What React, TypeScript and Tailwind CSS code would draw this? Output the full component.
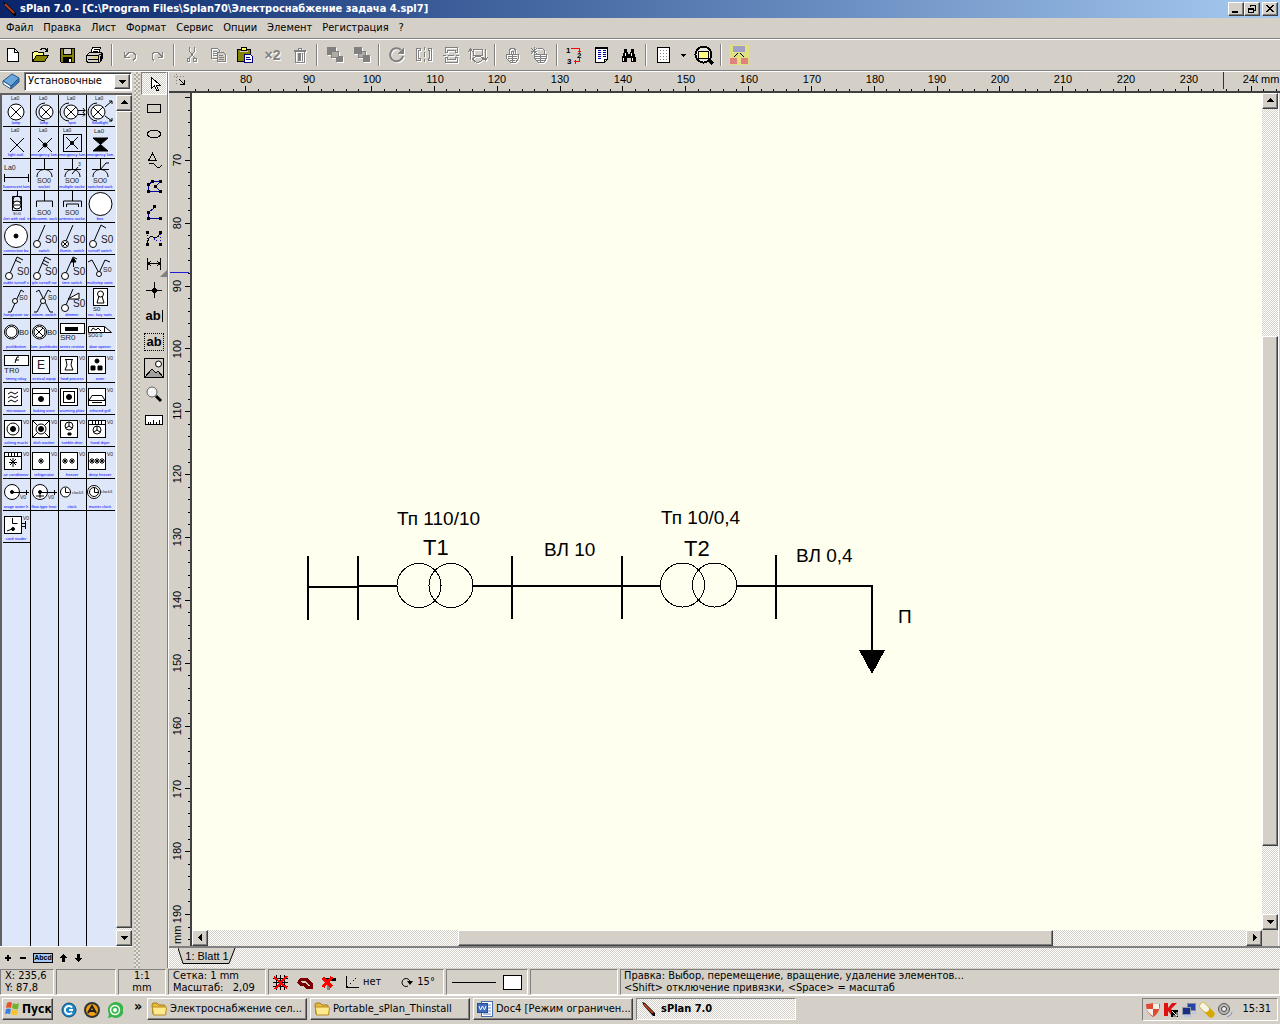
import type { ReactNode } from 'react';

const menuItems = ['Файл', 'Правка', 'Лист', 'Формат', 'Сервис', 'Опции', 'Элемент', 'Регистрация', '?'];

const GRAY = '#808080';
const FACE = '#d4d0c8';

const raised =
  'border border-t-white border-l-white border-r-[#404040] border-b-[#404040] bg-[#d4d0c8] shadow-[inset_-1px_-1px_0_#808080]';
const sunken = 'border border-t-[#808080] border-l-[#808080] border-r-white border-b-white';
const dither = 'bg-[repeating-conic-gradient(#ffffff_0_25%,#d4d0c8_0_50%)] bg-[length:2px_2px]';

type IconProps = { w?: number; h?: number; children: ReactNode };

function Icon({ w = 18, h = 18, children }: IconProps) {
  return (
    <svg
      width={w}
      height={h}
      viewBox={`0 0 ${w} ${h}`}
      fill="none"
      stroke="#000"
      shapeRendering="crispEdges"
      className="shrink-0"
      aria-hidden="true"
    >
      {children}
    </svg>
  );
}

// disabled icons get a white copy one pixel down and right
function Disabled({ w = 18, h = 18, children }: IconProps) {
  return (
    <svg width={w} height={h} viewBox={`0 0 ${w} ${h}`} fill="none" className="shrink-0" shapeRendering="crispEdges" aria-hidden="true">
      <g transform="translate(1 1)" className="text-white" stroke="currentColor">
        {children}
      </g>
      <g className="text-[#808080]" stroke="currentColor">
        {children}
      </g>
    </svg>
  );
}

function Pencil() {
  return (
    <svg width="16" height="16" viewBox="0 0 16 16" aria-hidden="true" className="shrink-0">
      <path d="M1 1l3 1 10 10v3h-2L3 5z" fill="#000" />
      <path d="M3 3l9 9" stroke="#c0401a" strokeWidth="2" />
      <path d="M4 3l9 9" stroke="#7a2a10" />
    </svg>
  );
}

type Tool = { name: string; icon: ReactNode };

const toolGroups: Tool[][] = [
  [
    {
      name: 'Новый',
      icon: (
        <Icon>
          <path d="M2.5 2.5h7l4 4v9h-11z" fill="#fff" />
          <path d="M9.5 2.5v4h4" />
        </Icon>
      ),
    },
    {
      name: 'Открыть',
      icon: (
        <Icon>
          <path d="M0.5 15.5v-9h1l1-1h3l1 1h5v3h-6z" fill="#ffff80" />
          <path d="M0.5 15.5l4-6h12l-4 6z" fill="#848200" />
          <path d="M8 3.5h1l1-1h3l1 1 1 1M15.5 2v3.5h-3" />
        </Icon>
      ),
    },
    {
      name: 'Сохранить',
      icon: (
        <Icon>
          <path d="M1.5 2.5h14v14h-13l-1-1z" fill="#848200" />
          <rect x="4.5" y="2.5" width="8" height="6" fill="#d4d0c8" />
          <rect x="4.5" y="11.5" width="8" height="5" fill="#000" />
          <rect x="10" y="13" width="2" height="3" fill="#fff" stroke="none" />
        </Icon>
      ),
    },
    {
      name: 'Печать',
      icon: (
        <Icon>
          <path d="M4.5 7.5l2-6h8l-2 6z" fill="#fff" />
          <path d="M8 3.5h5M7 5.5h5" />
          <path d="M0.5 9.5l3-3h11l2 1v5l-3 4h-12l-1-2z" fill="#d4d0c8" />
          <path d="M0.5 9.5h12v6M12.5 9.5l3-2M2 13.5h10M14.5 14.5v-5M15.5 13v-5" />
          <path d="M8 11.5h3" stroke="#e0d000" />
        </Icon>
      ),
    },
  ],
  [
    {
      name: 'Отменить',
      icon: (
        <Disabled>
          <path d="M3.5 6v5.5h5M4 10.5l4-4h4l2 2v4l-2 2" />
        </Disabled>
      ),
    },
    {
      name: 'Повторить',
      icon: (
        <Disabled>
          <path d="M14.5 6v5.5h-5M14 10.5l-4-4h-4l-2 2v4l2 2" />
        </Disabled>
      ),
    },
  ],
  [
    {
      name: 'Вырезать',
      icon: (
        <Disabled>
          <path d="M6.5 1v4l5 7M11.5 1v4l-5 7M9 7v3" />
          <path d="M4.5 12.5h2v3h-2zM10.5 12.5h3v3h-3z" />
        </Disabled>
      ),
    },
    {
      name: 'Копировать',
      icon: (
        <Disabled>
          <path d="M1.5 2.5h6l2 2v8h-8zM3 5.5h4M3 7.5h4M3 9.5h4" />
          <path d="M7.5 6.5h6l2 2v7h-8z" fill={FACE} />
          <path d="M9 9.5h4M9 11.5h5M9 13.5h5" />
        </Disabled>
      ),
    },
    {
      name: 'Вставить',
      icon: (
        <Icon>
          <rect x="0.5" y="3.5" width="13" height="12" fill="#848200" />
          <rect x="4.5" y="1.5" width="5" height="3" fill="#ffff60" />
          <path d="M3 5.5h8" stroke="#d4d0c8" />
          <path d="M7.5 8.5h6l2 2v6h-8z" fill="#fff" stroke="#000080" />
          <path d="M9 11.5h4M9 13.5h5" stroke="#000080" />
        </Icon>
      ),
    },
    {
      name: 'Дублировать',
      icon: <span className="font-['Liberation_Sans'] text-sm font-bold text-[#808080] [text-shadow:1px_1px_0_#fff]">×2</span>,
    },
    {
      name: 'Удалить',
      icon: (
        <Disabled>
          <path d="M3 4.5h12M3 5.5h12M7.5 4v-2h3v2M4.5 6v10h9v-10M7.5 7v8M9.5 7v8M11.5 7v8M8.5 7v8" />
        </Disabled>
      ),
    },
  ],
  [
    {
      name: 'На передний план',
      icon: (
        <Disabled>
          <path d="M1 1h9v8h-9zM10 10h7v6h-7z" fill="currentColor" stroke="none" />
          <rect x="5.5" y="5.5" width="7" height="6" fill="#b0aca4" />
        </Disabled>
      ),
    },
    {
      name: 'На задний план',
      icon: (
        <Disabled>
          <rect x="5.5" y="5.5" width="7" height="6" fill="#b0aca4" />
          <path d="M1 1h8v7h-8zM10 9h7v7h-7z" fill="currentColor" stroke="none" />
        </Disabled>
      ),
    },
  ],
  [
    {
      name: 'Повернуть',
      icon: (
        <Disabled>
          <path d="M13 4a6.5 6.5 0 1 0 2 6" strokeWidth="2" shapeRendering="auto" />
          <path d="M16 1v7h-7z" fill="currentColor" stroke="none" />
        </Disabled>
      ),
    },
    {
      name: 'Отразить по горизонтали',
      icon: (
        <Disabled>
          <path d="M5 2.5h-3.5v12h3.5v-2h-1.5v-8h1.5zM13 2.5h3.5v12h-3.5v-2h1.5v-8h-1.5zM9 1v3M9 6v5M9 13v3" />
        </Disabled>
      ),
    },
    {
      name: 'Отразить по вертикали',
      icon: (
        <Disabled>
          <path d="M3.5 6.5v-5h12v5h-2v-2h-8v2zM3.5 11.5v5h12v-5h-2v2h-8v-2zM1 9h3M6 9h6M14 9h3" />
        </Disabled>
      ),
    },
    {
      name: 'Развернуть',
      icon: (
        <Disabled w={20}>
          <path d="M5.5 3.5h9v6h-9zM2.5 14v-10M0 6l2.5-3 2.5 3M17.5 3v10M15 11l2.5 3 2.5-3M4 13l5-3h3l4 3-5 3h-3z" />
        </Disabled>
      ),
    },
  ],
  [
    {
      name: 'Блокировать',
      icon: (
        <Disabled>
          <path d="M5.5 8v-4l2-2h2l2 2v4M7.5 8v-3h2v3M2.5 8.5h12v4l-3 4h-5l-4-4zM4 10.5h9M4 12.5h9M6 14.5h5M8.5 9v7" />
        </Disabled>
      ),
    },
    {
      name: 'Разблокировать',
      icon: (
        <Disabled>
          <path d="M0 2l6 6M6 2l-6 6M3 1v7M0 5h6M7 3l2-1h2l2 2v4M3.5 8.5h12v4l-3 4h-5l-4-4zM4 10.5h11M4 12.5h11M6 14.5h7M9 9v7" />
        </Disabled>
      ),
    },
  ],
  [
    {
      name: 'Нумерация',
      icon: (
        <Icon w={20} h={20}>
          <path d="M6 3.5h8.5v4M13 6.5h3M14.5 13v3.500h-6M10.5 14.5v4" stroke="#f00" />
          <g className="font-['Liberation_Sans'] text-[8px] font-bold" fill="#000" stroke="none">
            <text x="1" y="8">1</text>
            <text x="12" y="13">2</text>
            <text x="2" y="19">3</text>
          </g>
        </Icon>
      ),
    },
    {
      name: 'Список элементов',
      icon: (
        <Icon>
          <path d="M2.5 1.5h12v12l-3 3h-9z" fill="#fff" />
          <path d="M3 2.5h11M14.5 2v12M11 16v-3h3" />
          <path d="M5 4.5h3M5 6.5h3M5 8.5h3M5 10.5h3M5 12.5h3M10 4.5h3M10 6.5h3M10 8.5h3M10 10.5h3" stroke="#0000a0" />
        </Icon>
      ),
    },
    {
      name: 'Найти',
      icon: (
        <Icon>
          <path d="M4 3h3v3h1v2h2v-2h1v-3h3v3l2 6v4h-5v-4h-4v4h-5v-4l2-6z" fill="#000" stroke="none" />
          <path d="M3.5 12v3M5.5 7v3M12.5 12v3M11.5 7v3" stroke="#fff" />
        </Icon>
      ),
    },
  ],
];

type SymbolDef = { label: string; draw: ReactNode };

const cross = (x: number, y: number, r: number) => `M${x - r} ${y - r}l${r * 2} ${r * 2}M${x + r} ${y - r}l${-r * 2} ${r * 2}`;

function T({ x, y, s = 5, children }: { x: number; y: number; s?: number; children: ReactNode }) {
  return (
    <text x={x} y={y} fontSize={s} fill="#222" stroke="none">
      {children}
    </text>
  );
}

function Lamp({ x = 13, r = 8 }: { x?: number; r?: number }) {
  return (
    <>
      <T x={8} y={5}>La0</T>
      <circle cx={x} cy="17" r={r} fill="#fff" />
      <path d={cross(x, 17, 5)} />
    </>
  );
}

function Socket({ children }: { children?: ReactNode }) {
  return (
    <>
      <path d="M13.5 0v10M5 10.5h17M6 18c0-10 15-10 15 0" />
      {children}
      <T x={6} y={24} s={7}>SO0</T>
    </>
  );
}

function Switch({ children }: { children?: ReactNode }) {
  return (
    <>
      <path d="M7 18l7-16" />
      <circle cx="6" cy="21" r="3.5" fill="#fff" />
      {children}
      <T x={14} y={20} s={10}>S0</T>
    </>
  );
}

function Device({ children }: { children?: ReactNode }) {
  return (
    <>
      <rect x="1.5" y="5.5" width="17" height="17" fill="#fff" />
      <T x={20} y={9}>V0</T>
      {children}
    </>
  );
}

const symbols: SymbolDef[] = [
  { label: 'lamp', draw: <Lamp /> },
  { label: 'lamp', draw: <><Lamp x={15} r={7} /><path d="M14 8a9 9 0 0 0 0 18" /></> },
  { label: 'spot', draw: <><Lamp x={12} r={7} /><path d="M10 8a9 9 0 0 0 0 18M19 15.5h7M19 19.5h7M24 13l2 2.5-2 2M24 17l2 2.5-2 2" /></> },
  { label: 'floodlight', draw: <><Lamp x={11} r={7} /><path d="M10 8a9 9 0 0 0 0 18M18 12l7-6M22 6h3v3M18 21l7 5M22 26h3v-3" /></> },
  { label: 'light outl.', draw: <><T x={8} y={5}>La0</T><path d={cross(14, 18, 7)} /></> },
  { label: 'emergency lum.', draw: <><T x={8} y={5}>La0</T><path d={cross(14, 18, 7)} /><circle cx="14" cy="18" r="2" fill="#000" /></> },
  { label: 'emergency lum.', draw: <><T x={4} y={5}>La0</T><rect x="4.5" y="7.5" width="18" height="17" /><path d={cross(13, 16, 6)} /><circle cx="13" cy="16" r="1.5" fill="#000" /></> },
  { label: 'emergency lum.', draw: <><T x={7} y={6} s={6}>La0</T><path d="M6 11h15l-15 13h15z" fill="#000" /></> },
  { label: 'fluorescent lam', draw: <><T x={1} y={11} s={7}>La0</T><path d="M1.5 15v8M25.5 15v8M2 18.5h23" /></> },
  { label: 'socket', draw: <Socket /> },
  { label: 'multiple socke', draw: <Socket><path d="M13 15l6-7" /><T x={19} y={7}>3</T></Socket> },
  { label: 'switched sock', draw: <Socket><path d="M13 11l6-7h3" /></Socket> },
  { label: 'cket with isol. tr', draw: <><path d="M14.5 0v6M9.5 5.500h9v14h-9z" /><circle cx="14" cy="9" r="4" /><circle cx="14" cy="14" r="4" fill="#fff" /><path d="M11 14h6" /><T x={10} y={24} s={4}>SO0</T></> },
  { label: 'elecomm. sock', draw: <><path d="M13.5 0v10M5.5 16v-6h16v6" /><T x={6} y={24} s={7}>SO0</T></> },
  { label: 'antenna socke', draw: <><path d="M13.5 0v10M4.5 16v-6h18v6M7.5 16v-3h12v3" /><T x={6} y={24} s={7}>SO0</T></> },
  { label: 'box', draw: <circle cx="13.5" cy="13" r="11.5" fill="#fff" /> },
  { label: 'connection bo', draw: <><circle cx="13" cy="13" r="11.5" fill="#fff" /><circle cx="13" cy="13" r="2" fill="#000" /></> },
  { label: 'switch', draw: <Switch /> },
  { label: 'illumin. switch', draw: <Switch><path d={cross(6, 21, 2)} /></Switch> },
  { label: 'turnoff switch', draw: <Switch><path d="M14 2l5 3" /></Switch> },
  { label: 'ouble turnoff s', draw: <Switch><path d="M14 2l6 3M12 5l6 3" /></Switch> },
  { label: 'iple turnoff sw', draw: <Switch><path d="M14 2l6 3M12 5l6 3M11 8l6 3" /></Switch> },
  { label: 'time switch', draw: <Switch><path d="M14 2l4 2M14.5 12v-5M12 7l2.5-4 2.5 4z" fill="#000" /></Switch> },
  { label: 'multistep switc', draw: <><path d="M12 18l-7-13-4 2M12 18l6-13 5 2" /><circle cx="12" cy="19" r="2.5" fill="#fff" /><T x={16} y={17} s={7}>S0</T></> },
  { label: 'hangeover sw', draw: <><path d="M5 25h3l10-22 3 2" /><circle cx="12" cy="14" r="2.5" fill="#fff" /><T x={16} y={13} s={7}>S0</T></> },
  { label: 'interm. switch', draw: <><path d="M3 25h3l11-22 3 2M22 25h-3l-11-22-3 2" /><circle cx="12" cy="14" r="2.5" fill="#fff" /><T x={17} y={13} s={7}>S0</T></> },
  { label: 'dimmer', draw: <Switch><path d="M9 12l11-6v6z" fill="#fff" /></Switch> },
  { label: 'sec. key switc', draw: <><rect x="6.5" y="1.5" width="14" height="17" fill="#fff" /><circle cx="13.5" cy="7" r="3" /><path d="M12 9l-2 7h7l-2-7" /><T x={6} y={24} s={6}>S0</T></> },
  { label: 'pushbutton', draw: <><circle cx="8.5" cy="13" r="7" fill="#fff" /><circle cx="8.5" cy="13" r="5.5" strokeWidth="1" /><T x={16} y={16} s={8}>B0</T></> },
  { label: 'lum. pushbutto', draw: <><circle cx="8.5" cy="13" r="7" fill="#fff" /><circle cx="8.5" cy="13" r="5.5" /><path d={cross(8, 13, 4)} /><T x={16} y={16} s={8}>B0</T></> },
  { label: 'series resistor', draw: <><rect x="1.5" y="4.5" width="24" height="10" fill="#fff" /><rect x="6" y="8" width="13" height="4" fill="#000" stroke="none" /><T x={1} y={21} s={8}>SR0</T></> },
  { label: 'door opener', draw: <><path d="M1.5 7.5h16v6h-16zM17.5 7.5l7 6h-7M4 12l2-3 3 2 2-2 3 3" fill="#fff" /><T x={1} y={18}>SO0.0</T></> },
  { label: 'timing relay', draw: <><rect x="1.5" y="4.5" width="24" height="10" fill="#fff" /><path d="M12 12l2-6h2M12 9h4" /><T x={1} y={22} s={8}>TR0</T></> },
  { label: 'ectrical equip', draw: <Device><T x={6} y={18} s={12}>E</T></Device> },
  { label: 'food process', draw: <Device><path d="M6 8.5h8M7 9l1 5-2 5h8l-2-5 1-5" /></Device> },
  { label: 'oven', draw: <Device><circle cx="10" cy="10" r="2" fill="#000" /><path d="M4 15h4v4h-4zM11 15h4v4h-4z" fill="#000" /></Device> },
  { label: 'microwave', draw: <Device><path d="M5 11l3-2 4 2 3-2M5 15l3-2 4 2 3-2M5 19l3-2 4 2 3-2" /></Device> },
  { label: 'baking oven', draw: <Device><path d="M2 10.5h16" /><circle cx="10" cy="16" r="2.5" fill="#000" /></Device> },
  { label: 'warming plate', draw: <Device><rect x="4.5" y="8.5" width="11" height="11" /><circle cx="10" cy="14" r="2.5" fill="#000" /></Device> },
  { label: 'infrared grill', draw: <Device><path d="M5 12.500h10l3 5h-16zM5 19.5h10" /></Device> },
  { label: 'ashing machi', draw: <Device><circle cx="10" cy="14" r="6" /><circle cx="10" cy="14" r="2.5" fill="#000" /></Device> },
  { label: 'dish washer', draw: <Device><path d={cross(10, 14, 8)} /><circle cx="10" cy="14" r="5" fill="#fff" /><circle cx="10" cy="14" r="2.5" fill="#000" /></Device> },
  { label: 'tumble drier', draw: <Device><circle cx="10" cy="11" r="4" /><path d="M10 11v-4M10 11l-3 2M10 11l3 2M9 18h3v2h-3z" fill="#000" /></Device> },
  { label: 'hand dryer', draw: <Device><path d="M2 9.5h16M5.5 6v3M8.5 6v3M11.5 6v3M14.5 6v3M10 15v-4M10 15l-3 2M10 15l3 2" /><circle cx="10" cy="15" r="4" /></Device> },
  { label: 'air conditioner', draw: <Device><path d="M2 9.5h16M5.5 6v3M8.5 6v3M11.5 6v3M14.5 6v3M10 11v9M6 15.5h8M7 12l6 6M13 12l-6 6" /></Device> },
  { label: 'refrigerator', draw: <Device><path d="M10 11v6M7 14h6M8 12l4 4M12 12l-4 4" /></Device> },
  { label: 'freezer', draw: <Device><path d="M6 11v6M3 14h6M4 12l4 4M8 12l-4 4M13 11v6M10 14h6M11 12l4 4M15 12l-4 4" /></Device> },
  { label: 'deep freezer', draw: <Device><path d="M5 11v6M1 14h18M3 12l4 4M7 12l-4 4M10 11v6M8 12l4 4M12 12l-4 4M15 11v6M13 12l4 4M17 12l-4 4" /></Device> },
  { label: 'orage water h', draw: <><circle cx="9" cy="13" r="7.5" fill="#fff" /><path d="M9 13.5h17M23.5 11v5" /><circle cx="9" cy="13" r="1.5" fill="#000" /><T x={17} y={20}>V0</T></> },
  { label: 'flow-type heat', draw: <><circle cx="9" cy="13" r="7.5" fill="#fff" /><path d="M9 13.5h17M23.5 11v5M5 17h8M9 15v4" /><circle cx="9" cy="13" r="1.5" fill="#000" /><T x={17} y={20}>V0</T></> },
  { label: 'clock', draw: <><circle cx="6.5" cy="13" r="5" fill="#fff" /><path d="M6.5 9v4.500h4" /><T x={13} y={15} s={4}>clock3</T></> },
  { label: 'master clock', draw: <><circle cx="7" cy="13" r="6.5" fill="#fff" /><circle cx="7" cy="13" r="4.5" /><path d="M7.5 9v4.500h4" /><T x={14} y={14} s={4}>clock3</T></> },
  { label: 'card reader', draw: <Device><path d="M9.5 7v5.500h5M4 20l5-2M18 12.500h5M18 15.500h5M22.5 10v8" /><circle cx="10" cy="18" r="1.5" fill="#000" /></Device> },
];

const drawTools: Tool[] = [
  { name: 'Выбор', icon: <Icon><path d="M6.5 2.5v11l3-3 2 5h2l-2-5h4z" fill="#fff" /></Icon> },
  { name: 'Прямоугольник', icon: <Icon><rect x="2.5" y="5.5" width="13" height="8" /></Icon> },
  { name: 'Эллипс', icon: <Icon><ellipse cx="9" cy="9" rx="6.5" ry="4" /></Icon> },
  { name: 'Фигура', icon: <Icon><path d="M7.5 2.5l4 7h-8zM4 13l2-1 3 1 3 3h3l2-2" /></Icon> },
  {
    name: 'Многоугольник',
    icon: (
      <Icon>
        <path d="M3.5 7.5l4-3h8l-5 5 5 5h-12z" stroke="#0000a0" />
        <path d="M2 6h3v3h-3zM6 3h3v3h-3zM14 3h3v3h-3zM9 8h3v3h-3zM14 13h3v3h-3zM2 13h3v3h-3z" fill="#000" stroke="none" />
      </Icon>
    ),
  },
  {
    name: 'Линия',
    icon: (
      <Icon>
        <path d="M9.5 4.5l-6 5v6h12" stroke="#0000a0" />
        <path d="M8 2h3v3h-3zM2 8h3v3h-3zM2 14h3v3h-3zM14 14h3v3h-3z" fill="#000" stroke="none" />
      </Icon>
    ),
  },
  {
    name: 'Кривая Безье',
    icon: (
      <Icon>
        <path d="M2.5 15.5v-12M2.5 3.5l13 12v-12" stroke="#0000c0" strokeDasharray="1 2" />
        <path d="M2 15c2-8 4-9 6-7s5 1 7-4" />
        <path d="M1 2h3v3h-3zM14 2h3v3h-3zM1 14h3v3h-3zM14 14h3v3h-3z" fill="#000" stroke="none" />
      </Icon>
    ),
  },
  { name: 'Размер', icon: <Icon><path d="M2.5 3v12M15.5 3v12M3 8.5h12M6 6l-3 2.5 3 2.5M12 6l3 2.5-3 2.5" /></Icon> },
  { name: 'Узел', icon: <Icon><path d="M1 9.5h16M9.5 1v16" /><circle cx="9.5" cy="9.5" r="2" fill="#000" /></Icon> },
  { name: 'Текст', icon: <span className="border-r border-black pr-px font-['Liberation_Sans'] text-[13px] leading-3 font-bold">ab</span> },
  { name: 'Текстовое поле', icon: <span className="border border-dotted border-black px-px font-['Liberation_Sans'] text-[13px] leading-4 font-bold">ab</span> },
  {
    name: 'Изображение',
    icon: (
      <Icon w={20} h={20}>
        <rect x="0.5" y="0.5" width="19" height="19" />
        <circle cx="14.5" cy="6" r="3" fill="#fff" shapeRendering="auto" />
        <path d="M1 19l7-8 4 4 2-2 5 6z" fill="#a0a0a0" />
      </Icon>
    ),
  },
  {
    name: 'Масштаб',
    icon: (
      <Icon>
        <circle cx="7" cy="7" r="5" fill="#f4f4f4" stroke="#606060" shapeRendering="auto" />
        <path d="M11 11l5 5" strokeWidth="3" shapeRendering="auto" />
        <path d="M5 6l2-2" stroke="#fff" />
      </Icon>
    ),
  },
  { name: 'Измерение', icon: <Icon><rect x="0.5" y="4.5" width="17" height="9" fill="#fff" /><path d="M3.5 11v2M5.5 11v2M8.5 9v4M11.5 11v2M14.5 9v4" /></Icon> },
];

function ScrollArrow({ dir }: { dir: 'up' | 'down' | 'left' | 'right' }) {
  const paths = { up: 'M4 8h7l-3.5-4z', down: 'M4 5h7l-3.5 4z', left: 'M9 3v7l-4-3.5z', right: 'M6 3v7l4-3.5z' };
  return (
    <button aria-label={dir} className={`flex h-4 w-4 shrink-0 items-center justify-center ${raised}`}>
      <svg width="14" height="14" viewBox="0 0 14 14" shapeRendering="crispEdges" aria-hidden="true">
        <path d={paths[dir]} />
      </svg>
    </button>
  );
}

function TitleButton({ name, d }: { name: string; d: string }) {
  return (
    <button aria-label={name} className={`flex h-[14px] w-4 items-center justify-center ${raised}`}>
      <svg width="12" height="10" viewBox="0 0 12 10" fill="none" stroke="#000" shapeRendering="crispEdges" aria-hidden="true">
        <path d={d} />
      </svg>
    </button>
  );
}

function Separator() {
  return (
    <span className="flex w-2 justify-center">
      <span className="h-[22px] w-[2px] border-l border-[#808080] bg-white" />
    </span>
  );
}

// pixels between two ruler ticks (2 mm)
const STEP = 12.57;
const range = (n: number) => Array.from({ length: n }, (_, i) => i);

function HorizontalRuler() {
  return (
    <svg className="h-[19px] min-w-0 flex-1 font-['Liberation_Sans'] text-[11px]" shapeRendering="crispEdges">
      {range(88).map((i) => {
        const x = Math.round(4 + i * STEP);
        return <path key={i} d={`M${x - 0.5} ${i % 5 === 4 ? 14 : 17}v6`} stroke="#000" />;
      })}
      {range(17).map((i) => (
        <text key={i} x={Math.round(54 + i * STEP * 5)} y="11" textAnchor="middle">
          {80 + i * 10}
        </text>
      ))}
      <rect x="1066" y="0" width="30" height="14" fill={FACE} />
      <text x="1069" y="11">mm</text>
      <path d="M1031.5 0v17" stroke="#2020d0" />
    </svg>
  );
}

function VerticalRuler() {
  return (
    <svg className="w-[23px] shrink-0 border-r-2 border-[#404040] font-['Liberation_Sans'] text-[11px]" shapeRendering="crispEdges">
      {range(68).map((i) => (
        <path key={i} d={`M${i % 5 === 0 ? 16 : 19} ${Math.round(4 + i * STEP) + 0.5}h6`} stroke="#000" />
      ))}
      {range(13).map((i) => (
        <text key={i} transform={`translate(12 ${Math.round(67 + i * STEP * 5)}) rotate(-90)`} textAnchor="middle">
          {70 + i * 10}
        </text>
      ))}
      <text transform="translate(12 851) rotate(-90)">mm</text>
      <path d="M1 179.5h19" stroke="#2020d0" />
    </svg>
  );
}

function Schematic() {
  return (
    <svg className="min-w-0 flex-1 bg-[#fffff0] font-['Liberation_Sans'] text-[19px]" shapeRendering="crispEdges">
      <g stroke="#000" strokeWidth="2" fill="none">
        <path d="M116 463v64M166 463v64M116 494h50M166 493h39M281 493h149M320 463v63M430 463v63M430 493h39M545 493h135v65M584 462v64" />
        <g strokeWidth="1">
          <circle cx="227" cy="492.5" r="22" />
          <circle cx="259" cy="492.5" r="22" />
          <circle cx="490.5" cy="492" r="22" />
          <circle cx="522.5" cy="492" r="22" />
        </g>
      </g>
      <path d="M667 557h26l-13 24z" />
      <text x="205" y="432">Тп 110/10</text>
      <text x="231" y="462" className="text-[22px]">Т1</text>
      <text x="352" y="463">ВЛ 10</text>
      <text x="469" y="431">Тп 10/0,4</text>
      <text x="492" y="463" className="text-[22px]">Т2</text>
      <text x="604" y="469">ВЛ 0,4</text>
      <text x="706" y="530">П</text>
    </svg>
  );
}

function Folder() {
  return (
    <svg width="16" height="16" viewBox="0 0 16 16" className="shrink-0" aria-hidden="true">
      <path d="M1 4q0-2 2-2h3l2 2h5q1 0 1 1v8h-12z" fill="#e8b93c" stroke="#a87a10" />
      <path d="M2.5 14l-1-7q0-1 1-1h12q1 0 1 1l-1 7z" fill="#fde98e" stroke="#b98d1f" />
    </svg>
  );
}

function WordDoc() {
  return (
    <svg width="16" height="16" viewBox="0 0 16 16" className="shrink-0" aria-hidden="true">
      <rect x="4.5" y="0.5" width="11" height="15" fill="#fff" stroke="#4a6ea8" />
      <path d="M11 4h3M11 7h3M11 10h3M6 13h8" stroke="#6c8cc4" />
      <rect x="0.5" y="2.5" width="10" height="9" fill="#3d6cc0" stroke="#244c98" />
      <path d="M2 5l1.5 4 2-4 2 4L9 5" stroke="#fff" fill="none" />
    </svg>
  );
}

const tasks = [
  { label: 'Электроснабжение сел...', icon: <Folder /> },
  { label: 'Portable_sPlan_Thinstall', icon: <Folder /> },
  { label: 'Doc4 [Режим ограничен...', icon: <WordDoc /> },
];

function Palette() {
  return (
    <aside className="flex w-[133px] shrink-0 flex-col pr-px">
      <div className="flex h-[21px] items-start gap-1 pl-[2px]">
        <svg width="18" height="18" viewBox="0 0 18 18" className="shrink-0" aria-hidden="true">
          <path d="M1 9l9-7 7 4-8 8z" fill="#6aa7dc" stroke="#245488" />
          <path d="M1 9v3l8 5v-3z" fill="#fff" stroke="#245488" />
          <path d="M9 14v3l8-7V6z" fill="#3b78b4" stroke="#245488" />
        </svg>
        <div className="relative flex-1">
          <select
            aria-label="Библиотека"
            className="h-[19px] w-full appearance-none border border-t-[#808080] border-l-[#808080] border-r-white border-b-white bg-white pl-[3px] text-[11px] shadow-[inset_1px_1px_0_#404040]"
          >
            <option>Установочные</option>
          </select>
          <span className={`pointer-events-none absolute top-[2px] right-[2px] flex h-[15px] w-4 items-center justify-center ${raised}`}>
            <svg width="7" height="4" viewBox="0 0 7 4" shapeRendering="crispEdges" aria-hidden="true">
              <path d="M0 0h7L3.5 4z" />
            </svg>
          </span>
        </div>
      </div>

      <div className="flex min-h-0 flex-1 border-t-2 border-l-2 border-[#606060] bg-[#dde7f9]">
        <div className="flex flex-1 pl-px">
          {range(4).map((col) => (
            <div key={col} className="flex w-7 flex-col border-r border-black last:border-r-0">
              {symbols
                .filter((_, i) => i % 4 === col)
                .map((symbol) => (
                  <button key={symbol.label} className="h-8 shrink-0 overflow-hidden border-b border-black">
                    <svg
                      width="28"
                      height="31"
                      viewBox="0 0 28 31"
                      fill="none"
                      stroke="#000"
                      className="font-['Liberation_Sans']"
                    >
                      {symbol.draw}
                      <text x="13" y="29" textAnchor="middle" fontSize="4" fill="#0000ff" stroke="none">
                        {symbol.label}
                      </text>
                    </svg>
                  </button>
                ))}
            </div>
          ))}
        </div>
        <div className={`flex w-4 flex-col ${dither}`}>
          <ScrollArrow dir="up" />
          <div className={`flex-1 ${raised}`} />
          <div className="h-[2px]" />
          <ScrollArrow dir="down" />
        </div>
      </div>

      <div className="flex h-[22px] items-center gap-[5px] border-t border-white pl-[3px]">
        <button aria-label="Добавить"><Icon w={10} h={10}><path d="M2 5h6M5 2v6" strokeWidth="2" /></Icon></button>
        <button aria-label="Убрать"><Icon w={10} h={10}><path d="M2 5h6" strokeWidth="2" /></Icon></button>
        <button className="h-[10px] w-5 border border-black bg-[#a6c8f4] font-['Liberation_Sans'] text-[7px] leading-[8px] font-bold">Abcd</button>
        <button aria-label="Вверх"><Icon w={10} h={10}><path d="M5 1L1 5h3v4h3V5h3z" fill="#000" stroke="none" /></Icon></button>
        <button aria-label="Вниз"><Icon w={10} h={10}><path d="M5 9L1 5h3V1h3v4h3z" fill="#000" stroke="none" /></Icon></button>
      </div>
    </aside>
  );
}

function StatusBar() {
  return (
    <footer className="flex h-[27px] shrink-0 gap-[2px] pt-px leading-3">
      <div className={`w-[54px] pl-1 ${sunken}`}>X: 235,6<br />Y: 87,8</div>
      <div className={`w-[60px] ${sunken}`} />
      <div className={`w-12 text-center ${sunken}`}>1:1<br />mm</div>
      <div className={`w-[98px] pl-1 whitespace-pre ${sunken}`}>Сетка: 1 mm<br />Масштаб:   2,09</div>
      <div className={`flex w-44 items-center gap-[7px] pl-[3px] ${sunken}`}>
        <button aria-label="Сетка">
          <Icon w={17} h={17}>
            <path d="M1 4.5h15M1 8.5h15M1 12.5h15M4.5 1v15M8.5 1v15M12.5 1v15" />
            <path d="M2 3l13 11M15 2L3 15" stroke="#f00" strokeWidth="2" />
          </Icon>
        </button>
        <button aria-label="Привязка">
          <Icon w={17} h={17}><path d="M5 5h5l5 5v3h-4l-3-3h-3l-2-2z" stroke="#780000" strokeWidth="3" /></Icon>
        </button>
        <button aria-label="Выравнивание">
          <Icon w={17} h={17}>
            <path d="M5 5h11" stroke="#000" strokeWidth="3" />
            <path d="M8 6v10" stroke={GRAY} strokeWidth="3" />
            <path d="M3 4l9 9M12 3L3 13" stroke="#f00" strokeWidth="3" />
          </Icon>
        </button>
        <button className="flex items-center gap-1">
          <Icon w={15} h={14}><path d="M2.5 1v11.500h12" /><path d="M3 12l9-9" strokeDasharray="2 2" /></Icon>
          нет
        </button>
        <button className="ml-3 flex items-center gap-1">
          <svg width="13" height="13" viewBox="0 0 13 13" fill="none" stroke="#000" aria-hidden="true">
            <path d="M8 10a4 4 0 1 1 2-4" />
            <path d="M7 5h6l-3 4z" fill="#000" stroke="none" />
          </svg>
          15°
        </button>
      </div>
      <div className={`flex w-[82px] items-center gap-[7px] pl-[5px] ${sunken}`}>
        <span className="h-px w-11 bg-black" />
        <button aria-label="Заливка" className="h-[15px] w-[19px] border border-black bg-white" />
      </div>
      <div className={`w-[88px] ${sunken}`} />
      <div className={`min-w-0 flex-1 pl-[3px] ${sunken}`}>
        Правка: Выбор, перемещение, вращение, удаление элементов...
        <br />
        &lt;Shift&gt; отключение привязки, &lt;Space&gt; = масштаб
      </div>
    </footer>
  );
}

function Taskbar() {
  return (
    <nav className="flex h-[29px] shrink-0 items-start border-t border-white px-[2px] pt-[2px]">
      <button className={`flex h-[22px] w-[51px] items-center gap-px pl-px text-xs font-bold ${raised}`}>
        <svg width="17" height="16" viewBox="0 0 17 16" className="shrink-0" aria-hidden="true">
          <path d="M3 2q3-2 5 0L7 7Q4 6 2 7z" fill="#e8532a" />
          <path d="M9 2q3 2 6 0l-1 6q-3 1-6-1z" fill="#6fb52c" />
          <path d="M2 8q2-1 5 0l-1 5q-3-1-5 0z" fill="#3a7fe0" />
          <path d="M8 8q3 2 6 1l-1 5q-3 1-6-1z" fill="#f6c52c" />
        </svg>
        Пуск
      </button>
      <div className="flex h-6 items-center gap-[7px] pl-2">
        <button aria-label="Браузер">
          <svg width="16" height="16" viewBox="0 0 16 16" fill="none" aria-hidden="true">
            <circle cx="8" cy="8" r="7" fill="#1d86c4" stroke="#14507c" />
            <path d="M11 5.500a4 4 0 1 0 0 5M8 8h4" stroke="#fff" strokeWidth="2" />
          </svg>
        </button>
        <button aria-label="Проигрыватель">
          <svg width="16" height="16" viewBox="0 0 16 16" fill="none" aria-hidden="true">
            <circle cx="8" cy="8" r="7" fill="#f0a010" stroke="#333" strokeWidth="2" />
            <path d="M4 11l4-7 4 7M6 9h4" stroke="#222" strokeWidth="2" />
          </svg>
        </button>
        <button aria-label="Агент">
          <svg width="16" height="16" viewBox="0 0 16 16" fill="none" aria-hidden="true">
            <path d="M8 0a8 8 0 1 1-3 15l-4 1 1-4A8 8 0 0 1 8 0z" fill="#38b54a" />
            <circle cx="8" cy="8" r="4.5" stroke="#fff" strokeWidth="1.5" />
            <circle cx="8" cy="8" r="2" fill="#fff" />
          </svg>
        </button>
      </div>
      <button aria-label="Ещё" className="ml-[11px] w-[13px] text-left text-sm leading-4 font-bold">»</button>
      <div className="flex min-w-0 flex-1 gap-[3px]">
        {tasks.map((task) => (
          <button key={task.label} className={`flex h-[22px] w-40 items-center gap-[3px] pl-[3px] whitespace-nowrap ${raised}`}>
            {task.icon}
            {task.label}
          </button>
        ))}
        <button className={`flex h-[22px] w-40 items-center gap-1 pl-1 font-bold ${sunken} ${dither}`}>
          <Pencil />
          sPlan 7.0
        </button>
      </div>
      <div className={`flex h-[23px] items-center gap-[2px] pr-[6px] pl-[2px] ${sunken}`}>
        <svg width="16" height="16" viewBox="0 0 16 16" aria-hidden="true">
          <path d="M1 2q4 0 7-1 3 1 7 1 0 9-7 13Q1 11 1 2z" fill="#e04a30" />
          <path d="M8 1q3 1 6 1v5H8zM2 7h6v7Q3 11 2 7z" fill="#f4f0ec" />
        </svg>
        <svg width="16" height="16" viewBox="0 0 16 16" aria-hidden="true">
          <path d="M1 1h4v5l4-5h5L8 7l5 7H9L5 9v5H1z" fill="#e01010" />
          <rect x="8" y="8" width="7" height="7" />
          <path d="M9 9l5 5M14 10v4h-4" stroke="#fff" fill="none" />
        </svg>
        <svg width="16" height="16" viewBox="0 0 16 16" aria-hidden="true">
          <rect x="6.5" y="1.5" width="8" height="7" fill="#2444a8" stroke="#889" />
          <rect x="1.5" y="5.5" width="8" height="7" fill="#1a2f80" stroke="#99a" />
          <path d="M3 14h7M11 11h4" stroke="#b8c4e0" strokeWidth="2" />
        </svg>
        <svg width="16" height="16" viewBox="0 0 16 16" aria-hidden="true">
          <path d="M4 4l8 8" stroke="#d8a800" strokeWidth="7" strokeLinecap="round" />
          <path d="M4 4l3 3" stroke="#f4f4ec" strokeWidth="6" strokeLinecap="round" />
        </svg>
        <svg width="16" height="16" viewBox="0 0 16 16" fill="none" aria-hidden="true">
          <circle cx="7" cy="7" r="5.5" fill="#b8b8b8" stroke="#555" />
          <circle cx="7" cy="7" r="2.5" fill="#eee" stroke="#444" />
          <path d="M12 14q3-1 3-4M10 15l2-1" stroke="#8090d8" />
        </svg>
        <time className="pl-[7px]">15:31</time>
      </div>
    </nav>
  );
}

export default function App() {
  return (
    <div className="flex h-screen flex-col overflow-hidden bg-[#d4d0c8] font-['DejaVu_Sans_Condensed','Noto_Sans',sans-serif] text-[11px] text-black">
      <header className="flex h-[18px] shrink-0 items-center gap-[2px] bg-linear-to-r from-[#0a246a] to-[#a6caf0] px-[2px]">
        <Pencil />
        <h1 className="min-w-0 flex-1 truncate font-bold text-white">
          sPlan 7.0 - [C:\Program Files\Splan70\Электроснабжение задача 4.spl7]
        </h1>
        <div className="flex">
          <TitleButton name="Свернуть" d="M2 7.5h6M2 8.5h6" />
          <TitleButton name="Восстановить" d="M4.5 3V1h5v5h-2M4 1.5h6M2.5 4.5h5v4h-5zM2 5.5h6" />
        </div>
        <TitleButton name="Закрыть" d="M2 1l7 7M3 1l7 7M9 1l-7 7M10 1l-7 7" />
      </header>

      <nav className="flex h-[21px] shrink-0 items-center border-b border-[#808080] pl-px">
        {menuItems.map((item) => (
          <button key={item} className="px-[5px]">
            {item}
          </button>
        ))}
      </nav>

      <div className="flex h-8 shrink-0 items-center border-t border-b border-t-white border-b-[#808080]">
        {toolGroups.map((group, i) => (
          <div key={i} className="flex items-center">
            {group.map((tool) => (
              <button key={tool.name} aria-label={tool.name} className="flex h-6 w-[27px] items-center justify-center">
                {tool.icon}
              </button>
            ))}
            <Separator />
          </div>
        ))}
        <button aria-label="Сетка" className="flex h-6 w-[27px] items-center justify-center">
          <Icon>
            <rect x="2.5" y="1.5" width="12" height="15" fill="#fff" />
            <path d="M5 4.5h9M5 7.5h9M5 10.5h9M5 13.5h9" stroke={GRAY} strokeDasharray="1 2" />
          </Icon>
        </button>
        <button aria-label="Шаг сетки" className="flex h-6 w-[13px] items-center justify-center">
          <Icon w={5} h={3}><path d="M0 0h5L2.5 3z" fill="#000" stroke="none" /></Icon>
        </button>
        <button aria-label="Показать всё" className="flex h-6 w-[27px] items-center justify-center">
          <Icon w={20} h={20}>
            <circle cx="9.5" cy="9.5" r="8" fill="#e8e8e0" strokeWidth="2" />
            <path d="M15 15l4 4" strokeWidth="3" />
            <rect x="4.5" y="6.5" width="10" height="7" fill="#ffff80" />
          </Icon>
        </button>
        <Separator />
        <button aria-label="Листы" className="flex h-6 w-[27px] items-center justify-center">
          <Icon w={20} h={20}>
            <rect width="20" height="20" fill="#e0e080" stroke="none" />
            <path d="M4 1h12v6H4z" fill="#a0a0c8" stroke="none" />
            <path d="M1 13h7v6H1zM12 13h7v6h-7z" fill="#e08080" stroke="none" />
            <path d="M9 8l-4 4M11 8l4 4" />
          </Icon>
        </button>
      </div>

      <main className="flex min-h-0 flex-1 border-t border-white">
        <Palette />
        <div className="flex w-2 shrink-0 justify-center">
          <div className="w-[6px] bg-[repeating-conic-gradient(#b0aca4_0_25%,#e4e2dc_0_50%)] bg-[length:4px_4px]" />
        </div>
        <div className="flex w-[27px] shrink-0 flex-col items-start border-r border-[#808080]">
          {drawTools.map((tool, i) => (
            <button
              key={tool.name}
              aria-label={tool.name}
              className={
                i === 0
                  ? `flex h-[23px] w-[26px] items-center justify-center ${sunken} ${dither}`
                  : 'relative flex h-[26px] w-[26px] items-center justify-center'
              }
            >
              {tool.icon}
              {tool.name === 'Размер' && (
                <span className="absolute right-0 bottom-0 h-[7px] w-[7px] bg-[#808080] [clip-path:polygon(100%_0,100%_100%,0_100%)]" />
              )}
            </button>
          ))}
        </div>

        <section className="flex min-w-0 flex-1 flex-col border-l border-white">
          <div className="flex h-[21px] shrink-0 border-b-2 border-[#404040]">
            <div className="w-[23px] shrink-0 pt-px pl-1">
              <Icon w={17} h={17}>
                <path d="M1 3.5h12M3.5 1v12" stroke={GRAY} strokeDasharray="1 2" />
                <path d="M6 6l5 5M11.5 7v4.500h-5" />
              </Icon>
            </div>
            <HorizontalRuler />
          </div>
          <div className="flex min-h-0 flex-1">
            <VerticalRuler />
            <div className="flex min-w-0 flex-1 flex-col">
              <div className="flex min-h-0 flex-1">
                <Schematic />
                <div className={`flex w-4 shrink-0 flex-col ${dither}`}>
                  <ScrollArrow dir="up" />
                  <div className="flex-[227]" />
                  <div className={`flex-[509] ${raised}`} />
                  <div className="flex-[68]" />
                  <ScrollArrow dir="down" />
                </div>
              </div>
              <div className="flex h-4 shrink-0">
                <div className={`flex flex-1 ${dither}`}>
                  <ScrollArrow dir="left" />
                  <div className="flex-[250]" />
                  <div className={`flex-[595] ${raised}`} />
                  <div className="flex-[193]" />
                  <ScrollArrow dir="right" />
                </div>
                <div className="w-4 shrink-0" />
              </div>
            </div>
            <div className="w-[2px] shrink-0 border-l border-white" />
          </div>
          <div className={`h-[22px] shrink-0 border-t-2 border-[#808080] pl-[9px] ${dither}`}>
            <button className="relative h-4 w-[58px] font-['Liberation_Sans'] text-[11px] leading-4">
              <svg width="58" height="17" viewBox="0 0 58 17" className="absolute inset-0" aria-hidden="true">
                <path d="M0 0l5 15.500h46L57 0" fill={FACE} stroke="#000" />
              </svg>
              <span className="relative">1: Blatt 1</span>
            </button>
          </div>
        </section>
      </main>

      <StatusBar />
      <Taskbar />
    </div>
  );
}
